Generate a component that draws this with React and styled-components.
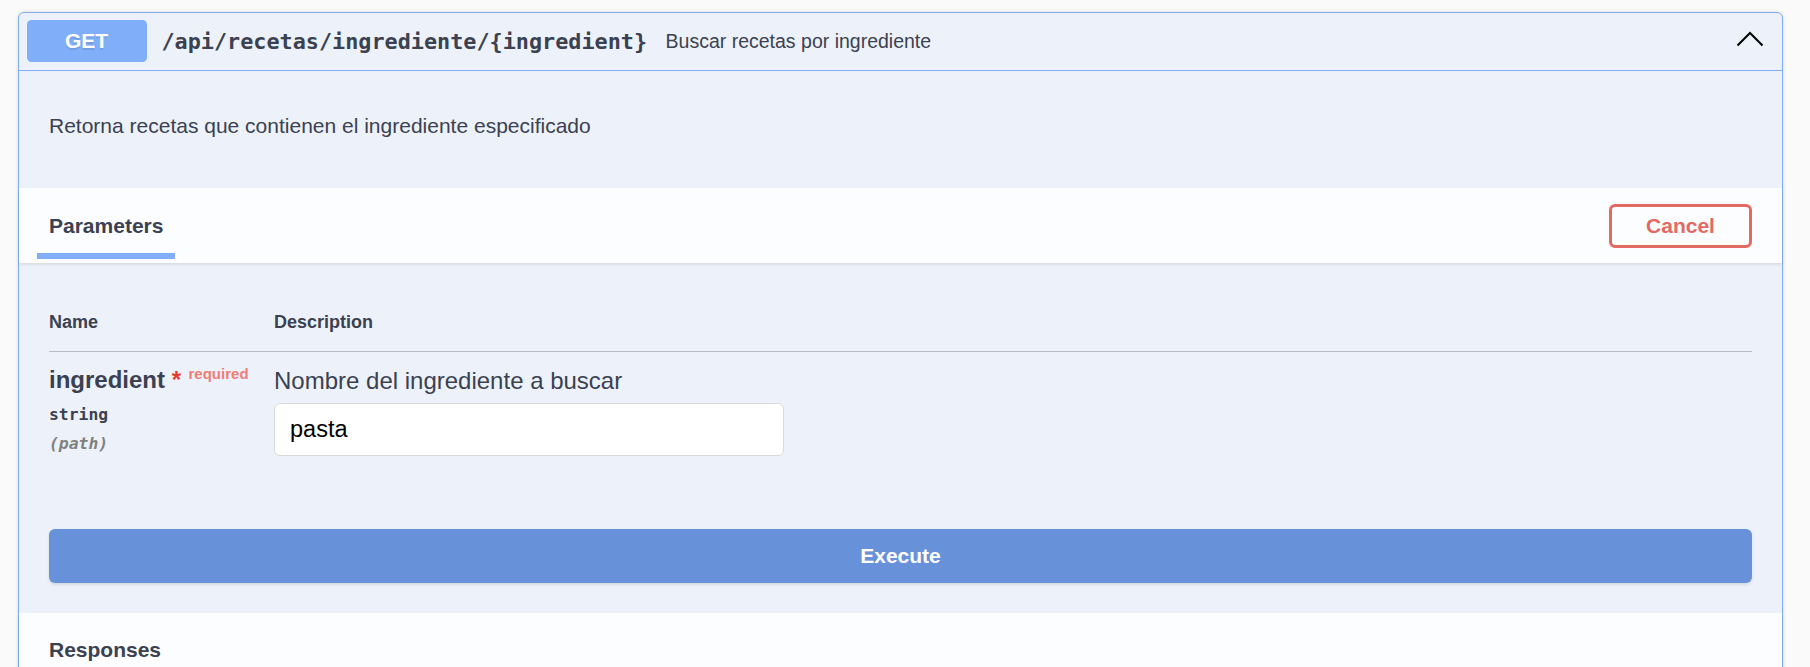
import React from "react";
import styled, { createGlobalStyle } from "styled-components";

const GlobalStyle = createGlobalStyle`
  html, body {
    margin: 0;
    padding: 0;
    background: #fafafa;
  }
  body {
    font-family: "Liberation Sans", Arial, sans-serif;
    color: #3b4151;
  }
  * { box-sizing: border-box; }
`;

const SANS = `"Liberation Sans", Arial, sans-serif`;
const MONO = `"DejaVu Sans Mono", "Liberation Mono", monospace`;

const Page = styled.div`
  padding: 12px 27px 0 18px;
`;

const Opblock = styled.div`
  border: 1px solid #80acf6;
  border-radius: 6px;
  background: #edf2fa;
  box-shadow: 0 0 4px rgba(0, 0, 0, 0.12);
`;

const Summary = styled.div`
  display: flex;
  align-items: center;
  padding: 7px 7.5px 8px;
  border-bottom: 1px solid #80acf6;
`;

const Method = styled.span`
  display: flex;
  align-items: center;
  justify-content: center;
  width: 120px;
  height: 42px;
  border-radius: 4.5px;
  background: #80aef8;
  color: #fff;
  font-family: ${SANS};
  font-size: 21px;
  font-weight: 700;
  text-shadow: 0 1.5px 0 rgba(0, 0, 0, 0.1);
`;

const Path = styled.span`
  margin-left: 15px;
  font-family: ${MONO};
  font-size: 21.8px;
  font-weight: 700;
  color: #3b4151;
`;

const SummaryDesc = styled.span`
  margin-left: 18.5px;
  font-family: ${SANS};
  font-size: 19.5px;
  color: #3b4151;
`;

const Arrow = styled.svg`
  margin-left: auto;
  margin-right: 10.5px;
  margin-bottom: 4px;
  display: block;
`;

const Description = styled.div`
  padding: 40px 30px 47px;
`;

const DescText = styled.p`
  margin: 0;
  font-family: ${SANS};
  font-size: 21px;
  line-height: 30px;
  color: #3b4151;
`;

const SectionHeader = styled.div`
  position: relative;
  display: flex;
  align-items: center;
  justify-content: space-between;
  height: 75px;
  padding: 0 30px;
  background: #fcfdfe;
  box-shadow: 0 1.5px 3px rgba(0, 0, 0, 0.1);
`;

const SectionTitle = styled.h4`
  position: relative;
  margin: 0;
  font-family: ${SANS};
  font-size: 21px;
  font-weight: 700;
  line-height: 24px;
  color: #3b4151;

  ${(p) =>
    p.$active &&
    `
    &::after {
      content: "";
      position: absolute;
      left: -10.5%;
      width: 121%;
      bottom: -21.5px;
      height: 6px;
      background: #80aef8;
    }
  `}
`;

const CancelButton = styled.button`
  width: 143px;
  height: 44px;
  border: 3px solid #e36a62;
  border-radius: 6px;
  background: transparent;
  color: #e36a62;
  font-family: ${SANS};
  font-size: 21px;
  font-weight: 700;
  cursor: pointer;
`;

const ParamsBody = styled.div`
  padding: 30px 30px 0;
`;

const HeadRow = styled.div`
  display: grid;
  grid-template-columns: 225px 1fr;
  padding: 18px 0;
  border-bottom: 1.5px solid rgba(59, 65, 81, 0.3);
`;

const HeadCell = styled.div`
  font-family: ${SANS};
  font-size: 18px;
  font-weight: 700;
  line-height: 22px;
  color: #3b4151;
`;

const ParamRow = styled.div`
  display: grid;
  grid-template-columns: 225px 1fr;
  padding: 12.5px 0 43px;
`;

const NameCell = styled.div`
  display: flex;
  flex-direction: column;
`;

const ParamName = styled.div`
  font-family: ${SANS};
  font-size: 24px;
  font-weight: 700;
  line-height: 30px;
  color: #3b4151;
  white-space: nowrap;
`;

const Star = styled.span`
  color: #e53a2e;
`;

const Required = styled.span`
  position: relative;
  top: -9px;
  padding-left: 7.5px;
  font-size: 15px;
  font-weight: 700;
  color: #ef7d78;
`;

const ParamType = styled.div`
  margin-top: 5.5px;
  font-family: ${MONO};
  font-size: 16.4px;
  font-weight: 700;
  line-height: 24px;
  color: #3b4151;
`;

const ParamIn = styled.div`
  margin-top: 4.5px;
  font-family: ${MONO};
  font-size: 16.4px;
  font-weight: 700;
  font-style: italic;
  line-height: 24px;
  color: #808080;
`;

const DescCell = styled.div`
  display: flex;
  flex-direction: column;
  align-items: flex-start;
`;

const ParamDesc = styled.div`
  margin-top: 1px;
  font-family: ${SANS};
  font-size: 24px;
  line-height: 30px;
  color: #3b4151;
`;

const Input = styled.input`
  margin-top: 7px;
  width: 510px;
  height: 53px;
  padding: 0 15px;
  border: 1px solid #d9d9d9;
  border-radius: 6px;
  background: #fff;
  font-family: ${SANS};
  font-size: 23.5px;
  color: #000;
  outline: none;
`;

const ExecuteWrapper = styled.div`
  padding: 30px;
`;

const ExecuteButton = styled.button`
  display: block;
  width: 100%;
  height: 54px;
  border: none;
  border-radius: 6px;
  background: #6791d9;
  color: #fff;
  font-family: ${SANS};
  font-size: 21px;
  font-weight: 700;
  box-shadow: 0 1.5px 3px rgba(0, 0, 0, 0.1);
  cursor: pointer;
`;

export default function App() {
  return (
    <>
      <GlobalStyle />
      <Page>
        <Opblock>
          <Summary>
            <Method>GET</Method>
            <Path>/api/recetas/ingrediente/{"{ingredient}"}</Path>
            <SummaryDesc>Buscar recetas por ingrediente</SummaryDesc>
            <Arrow width="28" height="16" viewBox="0 0 28 16">
              <polyline
                points="1.5,14.5 14,2 26.5,14.5"
                fill="none"
                stroke="#000"
                strokeWidth="2"
              />
            </Arrow>
          </Summary>

          <Description>
            <DescText>Retorna recetas que contienen el ingrediente especificado</DescText>
          </Description>

          <SectionHeader>
            <SectionTitle $active>Parameters</SectionTitle>
            <CancelButton>Cancel</CancelButton>
          </SectionHeader>

          <ParamsBody>
            <HeadRow>
              <HeadCell>Name</HeadCell>
              <HeadCell>Description</HeadCell>
            </HeadRow>
            <ParamRow>
              <NameCell>
                <ParamName>
                  ingredient<Star>&nbsp;*</Star>
                  <Required>required</Required>
                </ParamName>
                <ParamType>string</ParamType>
                <ParamIn>(path)</ParamIn>
              </NameCell>
              <DescCell>
                <ParamDesc>Nombre del ingrediente a buscar</ParamDesc>
                <Input defaultValue="pasta" />
              </DescCell>
            </ParamRow>
          </ParamsBody>

          <ExecuteWrapper>
            <ExecuteButton>Execute</ExecuteButton>
          </ExecuteWrapper>

          <SectionHeader>
            <SectionTitle>Responses</SectionTitle>
          </SectionHeader>
        </Opblock>
      </Page>
    </>
  );
}
